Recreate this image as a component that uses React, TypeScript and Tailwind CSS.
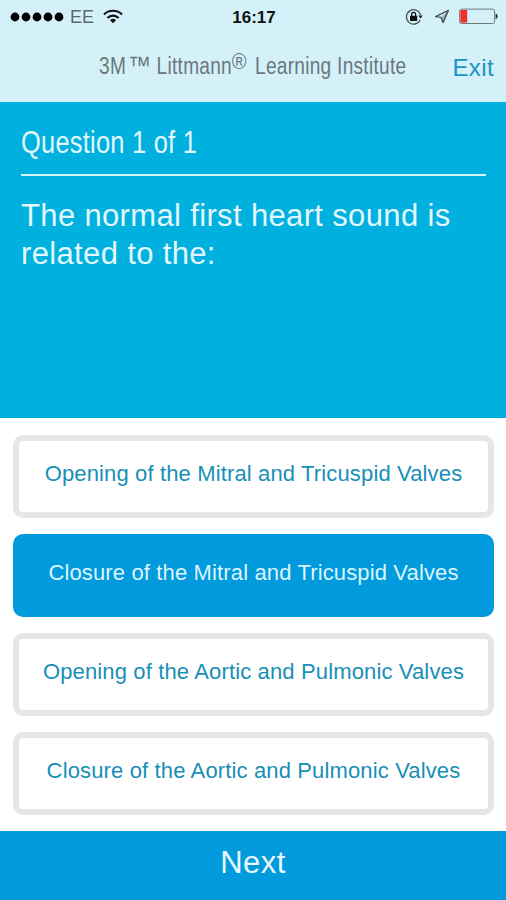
import { useState } from "react";

const answers: string[] = [
  "Opening of the Mitral and Tricuspid Valves",
  "Closure of the Mitral and Tricuspid Valves",
  "Opening of the Aortic and Pulmonic Valves",
  "Closure of the Aortic and Pulmonic Valves",
];

function StatusBar() {
  return (
    <div className="grid grid-cols-3 items-center h-[33px] pl-[10px] pr-[8px]">
      <div className="flex items-center">
        <svg width="54" height="10" viewBox="0 0 54 10" fill="#000">
          <circle cx="5" cy="5" r="4.4" />
          <circle cx="16" cy="5" r="4.4" />
          <circle cx="27" cy="5" r="4.4" />
          <circle cx="38" cy="5" r="4.4" />
          <circle cx="49" cy="5" r="4.4" />
        </svg>
        <span className="ml-[6px] text-[18px] leading-none text-[#5d6a70]">
          EE
        </span>
        <svg className="ml-[9px]" width="20" height="15" viewBox="0 0 20 15">
          <g fill="none" stroke="#111" strokeWidth="2.1">
            <path d="M1 5.4a13 13 0 0 1 18 0" />
            <path d="M4.4 8.9a8 8 0 0 1 11.2 0" />
          </g>
          <path d="M10 14.2l-3-2.9a4.3 4.3 0 0 1 6 0z" fill="#111" />
        </svg>
      </div>
      <span className="text-center text-[17px] leading-none font-bold text-[#111] pt-px">
        16:17
      </span>
      <div className="flex items-center justify-end">
        <svg width="18" height="18" viewBox="0 0 18 18" fill="none">
          <path
            d="M15.2 12A7.2 7.2 0 1 1 15.6 7"
            stroke="#4a5357"
            strokeWidth="1.3"
          />
          <path d="M13.2 7.4h4.6l-2.2 3.2z" fill="#222" />
          <rect x="5" y="7.8" width="7.2" height="5.2" rx="0.6" fill="#111" />
          <path
            d="M6.6 8V6.4a2 2 0 0 1 4 0V8"
            stroke="#111"
            strokeWidth="1.3"
          />
        </svg>
        <svg
          className="ml-[10px]"
          width="17"
          height="16"
          viewBox="0 0 17 16"
          fill="none"
        >
          <path
            d="M15.4 1.4L2.6 7.6l5.4.8 2 5.2z"
            stroke="#4a5357"
            strokeWidth="1.4"
            strokeLinejoin="round"
          />
          <path d="M15.4 1.4L8 8.4l2 5.2z" fill="#4a5357" fillOpacity="0.4" />
        </svg>
        <svg className="ml-[9px]" width="39" height="17" viewBox="0 0 39 17">
          <rect
            x="0.6"
            y="1.1"
            width="35"
            height="14.4"
            rx="2"
            fill="none"
            stroke="#6e797e"
            strokeWidth="1"
          />
          <rect x="1.4" y="2" width="6.8" height="12.6" fill="#f0302a" />
          <path d="M36.6 5.4c2.6.6 2.6 5.2 0 5.8z" fill="#222" />
        </svg>
      </div>
    </div>
  );
}

function Header() {
  return (
    <header className="h-[102px] shrink-0 bg-[#d4f1fa]">
      <StatusBar />
      <div className="flex items-center justify-between h-[66px] pl-[99px] pr-[12px]">
        <h1 className="w-[308px] h-[26px] text-[23px] leading-[24px] text-[#6b777c] whitespace-nowrap origin-left scale-x-[.83] tracking-[0.33px]">
          3M
          <span className="inline-block w-[28px] ml-[2px] origin-left scale-x-[1.12] text-[25px] leading-none">
            ™
          </span>{" "}
          Littmann
          <sup className="inline-block w-[21px] origin-left scale-x-[1.1] text-[22px] leading-none top-[-5px]">
            ®
          </sup>{" "}
          Learning Institute
        </h1>
        <button className="text-[24px] leading-none tracking-[0.4px] text-[#1795c4] pt-1">
          Exit
        </button>
      </div>
    </header>
  );
}

export default function App() {
  const [selected, setSelected] = useState<number>(1);

  return (
    <div className="flex flex-col w-full h-screen overflow-hidden bg-white font-['Liberation_Sans',Arial,sans-serif]">
      <Header />

      <section className="h-[316px] shrink-0 bg-[#00b0de] px-[21px] pt-[23px] text-[#e2f8fe]">
        <div className="pb-[13px] border-b-2 border-[#d5f4fc] mr-[-1px]">
          <h2 className="text-[31px] leading-[36px] origin-left scale-x-[.82] tracking-[0.3px]">
            Question 1 of 1
          </h2>
        </div>
        <p className="mt-[21px] text-[31px] leading-[38px] tracking-[0.35px]">
          The normal first heart sound is related to the:
        </p>
      </section>

      <main className="flex flex-col flex-1 gap-4 px-[13px] pt-[17px]">
        {answers.map((answer, index) => (
          <button
            key={answer}
            onClick={() => setSelected(index)}
            className={`h-[83px] w-[481px] shrink-0 rounded-[10px] border-[6px] pb-[6px] text-[22px] leading-none tracking-[0.14px] whitespace-nowrap ${
              selected === index
                ? "bg-[#009add] border-[#009add] text-[#dcf5fd]"
                : "bg-white border-[#e6e6e6] text-[#188fb6]"
            }`}
          >
            {answer}
          </button>
        ))}
      </main>

      <button className="h-[69px] shrink-0 bg-[#009add] pb-[7px] text-[31px] leading-none tracking-[0.5px] text-[#e6f8fe]">
        Next
      </button>
    </div>
  );
}
